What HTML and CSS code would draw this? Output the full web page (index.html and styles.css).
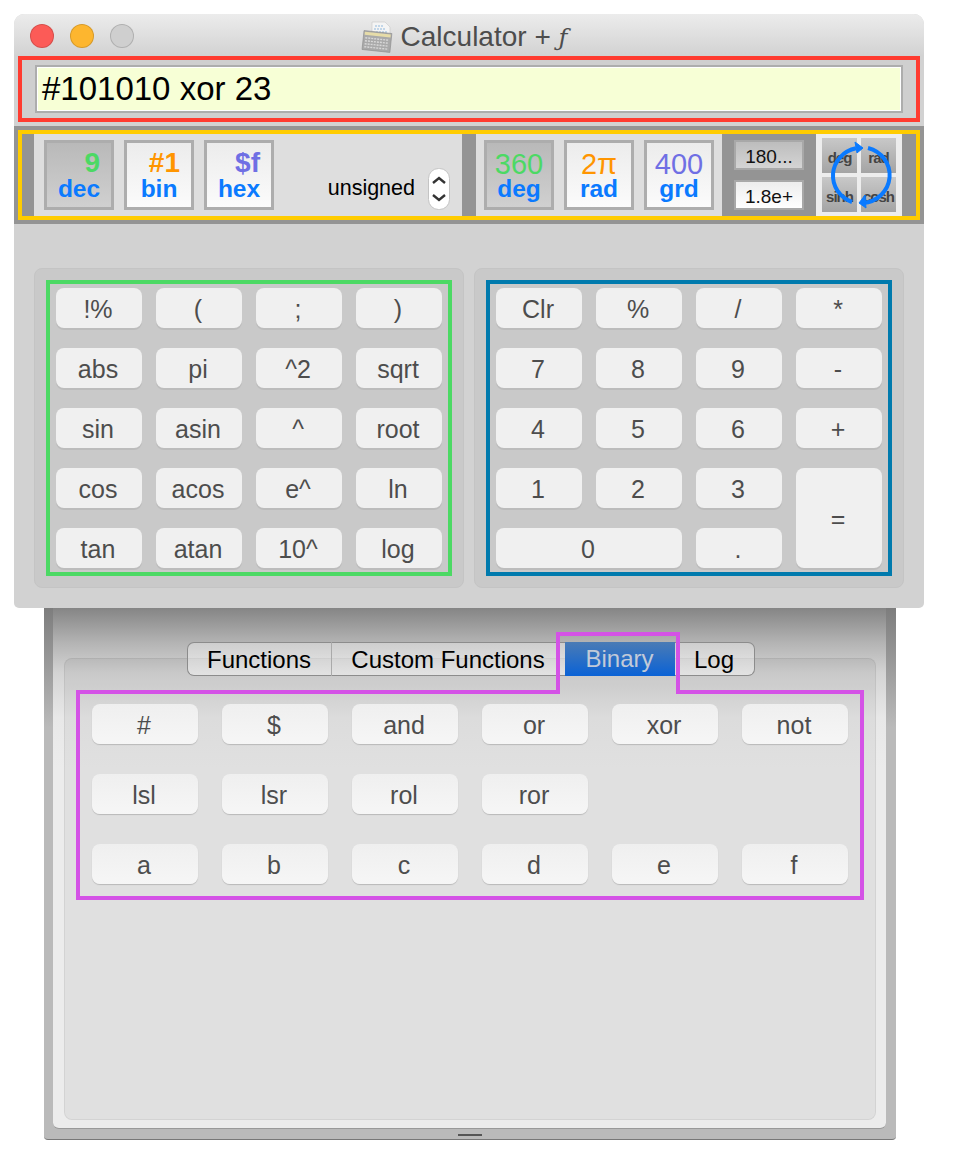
FILE: index.html
```html
<!DOCTYPE html>
<html lang="en">
<head>
  <meta charset="UTF-8" />
  <title>Calculator + f</title>
  <link rel="stylesheet" href="styles.css">
</head>
<body>
  <div class="calc-window">
    <header class="titlebar">
      <div class="lights">
        <span class="light red"></span>
        <span class="light orange"></span>
        <span class="light off"></span>
      </div>
      <svg class="app-icon" width="32" height="32" viewBox="0 0 32 32">
        <path d="M11 1 H24 L29 6 V17 H11 Z" fill="#f4f4f4" stroke="#c8c8c8" stroke-width="0.6"/>
        <path d="M14 5 H22 M13 8 H25 M15 11 H26" stroke="#8fb8dc" stroke-width="1.2" stroke-dasharray="2 1"/>
        <g transform="rotate(6 16 20)">
          <rect x="2" y="11" width="28" height="19" fill="#a9a9a9" stroke="#8a8a8a" stroke-width="0.6"/>
          <rect x="3" y="12" width="26" height="3" fill="#e6dca8"/>
          <path d="M4 18 H28 M4 21 H28 M4 24 H28 M4 27 H28" stroke="#d8d8d8" stroke-width="1.4" stroke-dasharray="2 1"/>
        </g>
      </svg>
      <span class="title">Calculator + <i class="func">ƒ</i></span>
    </header>

    <section class="input-box">
      <div class="expression">#101010 xor 23</div>
    </section>

    <section class="mode-band">
      <div class="mode-row">
        <div class="mode-panel base-panel">
          <div class="mode-btn base active"><span class="sample green">9</span><span class="label">dec</span></div>
          <div class="mode-btn base"><span class="sample orange-text">#1</span><span class="label">bin</span></div>
          <div class="mode-btn base"><span class="sample purple">$f</span><span class="label">hex</span></div>
          <div class="sign">
            <span>unsigned</span>
            <svg class="stepper" width="22" height="42" viewBox="0 0 22 42">
              <rect x="0.5" y="0.5" width="21" height="41" rx="10" fill="#fff" stroke="#c4c4c4"/>
              <path d="M5 15 L11 10 L17 15 M5 27 L11 32 L17 27" fill="none" stroke="#333" stroke-width="2.4"/>
            </svg>
          </div>
        </div>
        <div class="mode-panel angle-panel">
          <div class="mode-btn angle active"><span class="sample green">360</span><span class="label">deg</span></div>
          <div class="mode-btn angle"><span class="sample orange-text">2π</span><span class="label">rad</span></div>
          <div class="mode-btn angle"><span class="sample purple">400</span><span class="label">grd</span></div>
        </div>
        <div class="format-panel">
          <div class="format-btn active">180...</div>
          <div class="format-btn">1.8e+</div>
        </div>
        <div class="trig-panel">
          <span class="trig-cell">deg</span>
          <span class="trig-cell">rad</span>
          <span class="trig-cell">sinh</span>
          <span class="trig-cell">cosh</span>
          <svg class="trig-cycle" width="86" height="82" viewBox="0 0 86 82">
            <path d="M36 68 A29 28 0 0 1 40 14.3" fill="none" stroke="#0a7aff" stroke-width="4"/>
            <path d="M39 8 L47 14 L41 19 Z" fill="#0a7aff" stroke="#0a7aff" stroke-width="1"/>
            <path d="M52 14 A29 28 0 0 1 47 69" fill="none" stroke="#0a7aff" stroke-width="4"/>
            <path d="M49 61 L43 69 L50 74 Z" fill="#0a7aff" stroke="#0a7aff" stroke-width="1"/>
          </svg>
        </div>
      </div>
    </section>

    <main class="keypads">
      <div class="keypad-panel">
        <div class="keypad func-keys">
          <button class="key">!%</button>
          <button class="key">(</button>
          <button class="key">;</button>
          <button class="key">)</button>
          <button class="key">abs</button>
          <button class="key">pi</button>
          <button class="key">^2</button>
          <button class="key">sqrt</button>
          <button class="key">sin</button>
          <button class="key">asin</button>
          <button class="key">^</button>
          <button class="key">root</button>
          <button class="key">cos</button>
          <button class="key">acos</button>
          <button class="key">e^</button>
          <button class="key">ln</button>
          <button class="key">tan</button>
          <button class="key">atan</button>
          <button class="key">10^</button>
          <button class="key">log</button>
        </div>
      </div>
      <div class="keypad-panel">
        <div class="keypad num-keys">
          <button class="key">Clr</button>
          <button class="key">%</button>
          <button class="key">/</button>
          <button class="key">*</button>
          <button class="key">7</button>
          <button class="key">8</button>
          <button class="key">9</button>
          <button class="key">-</button>
          <button class="key">4</button>
          <button class="key">5</button>
          <button class="key">6</button>
          <button class="key">+</button>
          <button class="key">1</button>
          <button class="key">2</button>
          <button class="key">3</button>
          <button class="key tall">=</button>
          <button class="key wide">0</button>
          <button class="key">.</button>
        </div>
      </div>
    </main>
  </div>

  <div class="tab-window">
    <div class="tab-inner">
      <div class="tab-panel">
        <nav class="tabs">
          <span class="tab tab-functions">Functions</span>
          <span class="tab tab-custom">Custom Functions</span>
          <span class="tab tab-binary">Binary</span>
          <span class="tab tab-log">Log</span>
        </nav>
        <div class="bin-area">
          <svg class="bin-outline" width="788" height="268" viewBox="0 0 788 268">
            <path d="M2 60 H482 V2 H602 V60 H786 V266 H2 Z" fill="none" stroke="#d452e6" stroke-width="4"/>
          </svg>
          <div class="bin-keys">
            <button class="key">#</button>
            <button class="key">$</button>
            <button class="key">and</button>
            <button class="key">or</button>
            <button class="key">xor</button>
            <button class="key">not</button>
            <button class="key">lsl</button>
            <button class="key">lsr</button>
            <button class="key">rol</button>
            <button class="key">ror</button>
            <span></span>
            <span></span>
            <button class="key">a</button>
            <button class="key">b</button>
            <button class="key">c</button>
            <button class="key">d</button>
            <button class="key">e</button>
            <button class="key">f</button>
          </div>
        </div>
      </div>
    </div>
    <div class="grip"></div>
  </div>
</body>
</html>
```

FILE: styles.css
```css
* {
  margin: 0;
  padding: 0;
  box-sizing: border-box;
}

body {
  font-family: "Liberation Sans", Arial, sans-serif;
  background: #fff;
  padding: 14px 0 0 14px;
}

/* top window */

.calc-window {
  position: relative;
  z-index: 1;
  width: 910px;
  height: 594px;
  background: #d2d2d2;
  border-radius: 10px 10px 5px 5px;
}

.titlebar {
  height: 42px;
  display: flex;
  align-items: center;
  justify-content: center;
  gap: 8px;
  position: relative;
  background: linear-gradient(#ececec, #d2d2d2);
  border-radius: 10px 10px 0 0;
  padding: 3px 10px 0 0;
}

.lights {
  position: absolute;
  left: 16px;
  top: 10px;
  display: flex;
  gap: 16px;
}

.light {
  width: 24px;
  height: 24px;
  border-radius: 50%;
  border: 1px solid rgba(0, 0, 0, 0.15);
}

.light.red { background: #fc5b57; }
.light.orange { background: #fdb62f; }
.light.off { background: #cfcfcf; }

.title {
  font-size: 28px;
  color: #4d4d4d;
}

.func {
  font-family: "DejaVu Serif", serif;
  font-size: 24px;
}

.input-box {
  margin: 0 4px;
  height: 66px;
  border: 4px solid #ff3b30;
  padding: 5px 13px;
  background: #cfcfcf;
}

.expression {
  height: 48px;
  line-height: 44px;
  font-size: 33px;
  color: #000;
  padding-left: 5px;
  background: #f7ffd6;
  border: 2px solid #adadad;
  box-shadow: inset 0 0 0 1px #fff;
}

.mode-band {
  margin-top: 4px;
  height: 98px;
  padding: 4px;
  background: #949494;
}

.mode-row {
  height: 90px;
  border: 4px solid #ffcc00;
  display: flex;
  padding-left: 12px;
}

.mode-panel {
  display: flex;
  gap: 10px;
  padding: 6px 10px;
  background: #dedede;
}

.base-panel {
  width: 428px;
  padding-right: 12px;
}

.angle-panel {
  width: 246px;
  margin-left: 14px;
  padding: 6px 0 6px 8px;
}

.mode-btn {
  flex: none;
  width: 70px;
  height: 70px;
  padding-top: 6px;
  display: flex;
  flex-direction: column;
  border: 3px solid #adadad;
  background: linear-gradient(#ececec, #fbfbfb);
  text-align: center;
}

.mode-btn.active {
  background: linear-gradient(#b9b9b9, #d0d0d0);
}

.base .sample {
  height: 28px;
  line-height: 28px;
  font-size: 28px;
  font-weight: bold;
  text-align: right;
  padding-right: 11px;
}

.angle .sample {
  height: 30px;
  line-height: 30px;
  font-size: 29px;
}

.label {
  font-size: 24.5px;
  font-weight: bold;
  line-height: 20px;
  color: #0a7aff;
}

.base .label {
  margin-top: 2px;
}

.green { color: #4cd964; }
.orange-text { color: #ff9500; }
.purple { color: #6f6fe4; }

.sign {
  margin: auto 0 0 auto;
  height: 42px;
  display: flex;
  align-items: center;
  gap: 13px;
  font-size: 21.5px;
  color: #000;
}

.sign span {
  margin-bottom: 2px;
}

.stepper {
  display: block;
}

.format-panel {
  width: 94px;
  display: flex;
  flex-direction: column;
  gap: 10px;
  padding: 6px 12px;
}

.format-btn {
  height: 30px;
  padding-top: 4px;
  line-height: 22px;
  text-align: center;
  font-size: 19px;
  color: #111;
  background: linear-gradient(#ededed, #fff);
  border: 2px solid #a8a8a8;
}

.format-btn.active {
  background: linear-gradient(#bdbdbd, #d4d4d4);
}

.trig-panel {
  position: relative;
  width: 86px;
  display: grid;
  grid-template-columns: 35px 35px;
  grid-template-rows: 35px 35px;
  gap: 4px;
  padding: 4px 6px;
  background: #ededed;
}

.trig-cell {
  display: flex;
  align-items: center;
  justify-content: center;
  padding-top: 3px;
  white-space: nowrap;
  font-size: 15px;
  font-weight: bold;
  letter-spacing: -1px;
  color: #444;
  background: linear-gradient(#c8c8c8, #a4a4a4);
}

.trig-cycle {
  position: absolute;
  left: 0;
  top: 0;
}

.keypads {
  display: grid;
  grid-template-columns: 430px 430px;
  gap: 10px;
  padding: 44px 20px 20px;
}

.keypad-panel {
  height: 320px;
  padding: 12px;
  background: #c9c9c9;
  border-radius: 8px;
  border: 1px solid #c4c4c4;
}

.keypad {
  margin: -1px;
  height: 296px;
  padding: 4px 6px;
  display: grid;
  grid-template-columns: repeat(4, 86px);
  grid-auto-rows: 40px;
  gap: 20px 14px;
}

.func-keys { border: 4px solid #4cd964; }
.num-keys { border: 4px solid #007aad; }

.key {
  font-family: inherit;
  font-size: 25px;
  color: #4d4d4d;
  padding: 3px 2px 0 0;
  background: #f0f0f0;
  border: none;
  border-radius: 8px;
  box-shadow: 0 2px 0 #bcbcbc;
}

.key.tall { grid-row: span 2; }
.key.wide { grid-column: span 2; }

/* lower window with the tabs */

.tab-window {
  position: relative;
  margin-left: 30px;
  width: 852px;
  height: 532px;
  padding: 0 10px 11px 9px;
  background: linear-gradient(#7d7d7d, #bababa 120px);
  border-radius: 0 0 4px 4px;
  border-bottom: 1px solid #777;
}

.tab-inner {
  height: 521px;
  padding: 50px 10px 9px 11px;
  background: linear-gradient(#858585, #b4b4b4 35px, #d4d4d4 65px, #e8e8e8 110px, #ececec 160px);
  border-bottom: 1px solid #999;
  border-radius: 0 0 6px 6px;
}

.tab-panel {
  height: 462px;
  padding: 0 11px;
  background: rgba(0, 0, 0, 0.05);
  border: 1px solid rgba(0, 0, 0, 0.06);
  border-radius: 8px;
}

.tabs {
  display: flex;
  justify-content: center;
  height: 34px;
  margin: -17px 0 0 1px;
  font-size: 24px;
  color: #000;
}

.tab {
  line-height: 34px;
  text-align: center;
  background: linear-gradient(rgba(255, 255, 255, 0.35), rgba(255, 255, 255, 0.45));
  border: 1px solid #8c8c8c;
  border-width: 1px 0;
}

.tab-functions {
  width: 145px;
  border-left-width: 1px;
  border-right: 1px solid #aaa;
  border-radius: 7px 0 0 7px;
}

.tab-custom { width: 233px; }

.tab-binary {
  width: 110px;
  color: #c2cad8;
  background: linear-gradient(#4a7bb5, #0a62d6);
  border: none;
}

.tab-log {
  width: 80px;
  border-right-width: 1px;
  border-radius: 0 7px 7px 0;
}

.bin-area {
  position: relative;
  margin-top: 14px;
  height: 210px;
  padding: 14px 16px;
}

.bin-outline {
  position: absolute;
  left: 0;
  top: -58px;
}

.bin-keys {
  display: grid;
  grid-template-columns: repeat(6, 106px);
  grid-auto-rows: 40px;
  gap: 30px 24px;
}

.bin-keys .key {
  background: linear-gradient(#efefef, #f6f6f6);
  box-shadow: 0 1px 1px #b8b8b8;
}

.grip {
  position: absolute;
  left: 414px;
  bottom: 3px;
  width: 24px;
  height: 2px;
  background: #555;
}
```
